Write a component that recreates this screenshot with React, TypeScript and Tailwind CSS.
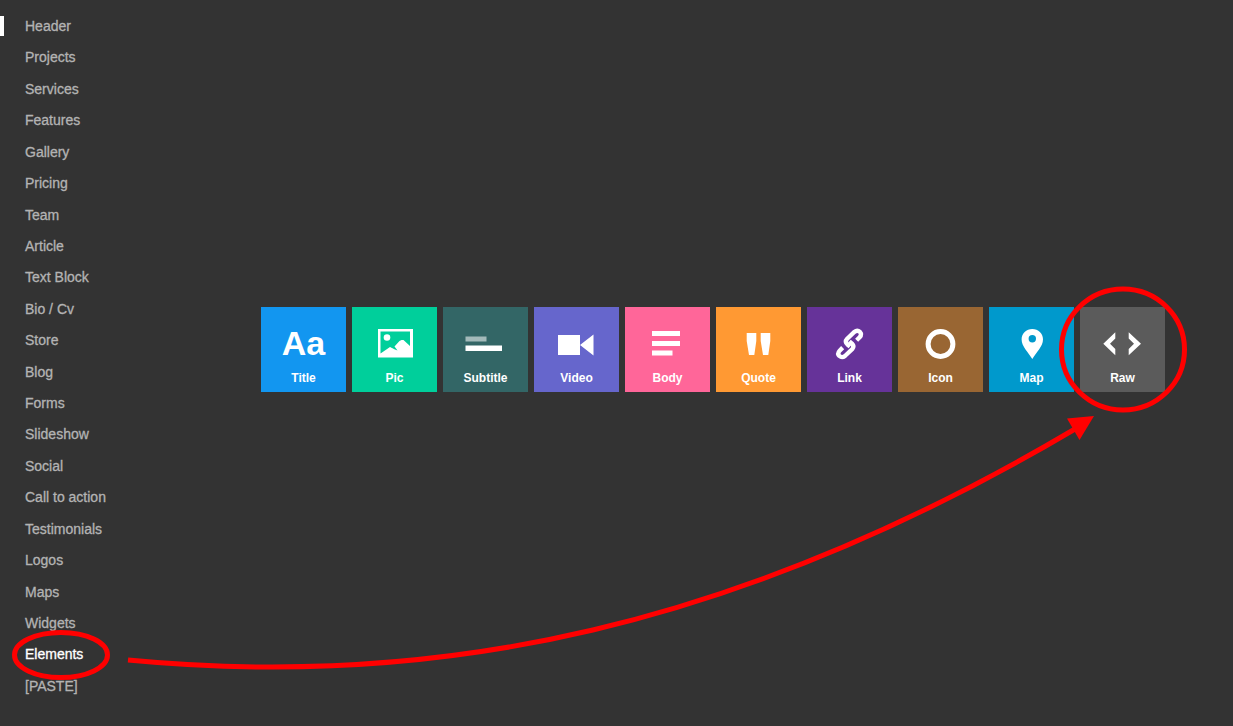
import { ReactNode, useState } from "react";

const sections = [
  "Header",
  "Projects",
  "Services",
  "Features",
  "Gallery",
  "Pricing",
  "Team",
  "Article",
  "Text Block",
  "Bio / Cv",
  "Store",
  "Blog",
  "Forms",
  "Slideshow",
  "Social",
  "Call to action",
  "Testimonials",
  "Logos",
  "Maps",
  "Widgets",
  "Elements",
  "[PASTE]",
];

const Glyph = ({ children }: { children: ReactNode }) => (
  <svg viewBox="0 0 85 60" className="h-[60px] w-full" fill="#fff" aria-hidden="true">
    {children}
  </svg>
);

const elements = [
  {
    name: "Title",
    color: "bg-[#1296f0]",
    icon: <span className="block h-[60px] pt-4 text-[34px] leading-10">Aa</span>,
  },
  {
    name: "Pic",
    color: "bg-[#00cf9b]",
    icon: (
      <Glyph>
        <path
          fillRule="evenodd"
          d="M26 22h35v28.500h-35zM28.500 24.500v22l9.500-6.500 5 2.500 2.500 1-3-4 5-5.500 2-1h2l6.500 6v-14.500z"
        />
        <circle cx="35" cy="30.500" r="3.300" />
      </Glyph>
    ),
  },
  {
    name: "Subtitle",
    color: "bg-[#336666]",
    icon: (
      <Glyph>
        <path opacity=".55" d="M22.500 29.500h21v5h-21z" />
        <path d="M22.500 38.500h36.500v5.500h-36.500z" />
      </Glyph>
    ),
  },
  {
    name: "Video",
    color: "bg-[#6666cc]",
    icon: (
      <Glyph>
        <path d="M24 28h22v20h-22zM46 38L59.500 27.500v21z" />
      </Glyph>
    ),
  },
  {
    name: "Body",
    color: "bg-[#ff6699]",
    icon: (
      <Glyph>
        <path d="M27 24h28v5h-28zM27 34h28v5h-28zM27 43.500h20.500v5h-20.500z" />
      </Glyph>
    ),
  },
  {
    name: "Quote",
    color: "bg-[#ff9933]",
    icon: (
      <Glyph>
        <path d="M30.700 26h9.600v8l-2 14h-5.300l-2.300-14zM44.700 26h9.600v8l-2 14h-5.300l-2.300-14z" />
      </Glyph>
    ),
  },
  {
    name: "Link",
    color: "bg-[#663399]",
    icon: (
      <Glyph>
        <g
          fill="none"
          stroke="#fff"
          strokeWidth="13"
          transform="translate(23 18) scale(0.333)"
        >
          <path d="M80 46L89 37Q97 28 90 21Q82 14 73 21L51 42Q44 50 52 58L60 65" />
          <path d="M38 68L29 77Q21 86 28 93Q36 100 45 93L67 72Q74 64 66 56L58 49" />
        </g>
      </Glyph>
    ),
  },
  {
    name: "Icon",
    color: "bg-[#996633]",
    icon: (
      <Glyph>
        <circle cx="42.500" cy="37" r="12.400" fill="none" stroke="#fff" strokeWidth="5" />
      </Glyph>
    ),
  },
  {
    name: "Map",
    color: "bg-[#0099cc]",
    icon: (
      <Glyph>
        <path
          fillRule="evenodd"
          d="M43.300 22c-6 0-10.700 4.500-10.700 10.300 0 7.200 6.500 12.700 10.700 19.700 4.200-7 10.700-12.500 10.700-19.700C54 26.500 49.300 22 43.300 22zm0 6a3.700 3.700 0 1 1 0 7.400a3.700 3.700 0 1 1 0-7.400z"
        />
      </Glyph>
    ),
  },
  {
    name: "Raw",
    color: "bg-[#5b5b5b]",
    icon: (
      <Glyph>
        <path d="M35.300 25.300v6.200l-5.300 5.300 5.300 5.300v6.200L23.300 36.800zM48.700 25.300v6.200l5.300 5.300-5.300 5.300v6.200L61 36.800z" />
      </Glyph>
    ),
  },
];

const Annotations = () => (
  <svg
    width="1233"
    height="726"
    viewBox="0 0 1233 726"
    className="pointer-events-none absolute top-0 left-0"
    fill="none"
    stroke="#f00"
    strokeWidth="5"
    aria-hidden="true"
  >
    <ellipse cx="61" cy="655" rx="46.500" ry="22.500" />
    <ellipse cx="1123" cy="349.500" rx="61.500" ry="60.500" />
    <path d="M128 660C440 690 740 627 1075 429" />
    <path d="M1094 416L1067 418.500L1079.500 440z" fill="#f00" stroke="none" />
  </svg>
);

const App = () => {
  const [active, setActive] = useState("Elements");
  return (
    <div className="relative flex min-h-screen overflow-hidden bg-[#333333] font-['Liberation_Sans',Arial,sans-serif]">
      <nav className="flex w-[193px] shrink-0 flex-col justify-between pt-4 pb-[30px] [-webkit-text-stroke:0.3px]">
        {sections.map((section, i) => (
          <button
            key={section}
            onClick={() => setActive(section)}
            className={`border-l-4 pl-[21px] text-left text-sm leading-5 ${
              i === 0 ? "border-white" : "border-transparent"
            } ${active === section ? "text-white" : "text-[#b3b3b3]"}`}
          >
            {section}
          </button>
        ))}
      </nav>
      <main className="flex flex-1 flex-wrap content-center items-center justify-center gap-1.5 pb-[27px]">
        {elements.map((el) => (
          <button
            key={el.name}
            className={`h-[85px] w-[85px] text-center font-bold text-white ${el.color}`}
          >
            {el.icon}
            <span className="block h-[25px] pt-px text-xs leading-5">{el.name}</span>
          </button>
        ))}
      </main>
      <Annotations />
    </div>
  );
};

export default App;
